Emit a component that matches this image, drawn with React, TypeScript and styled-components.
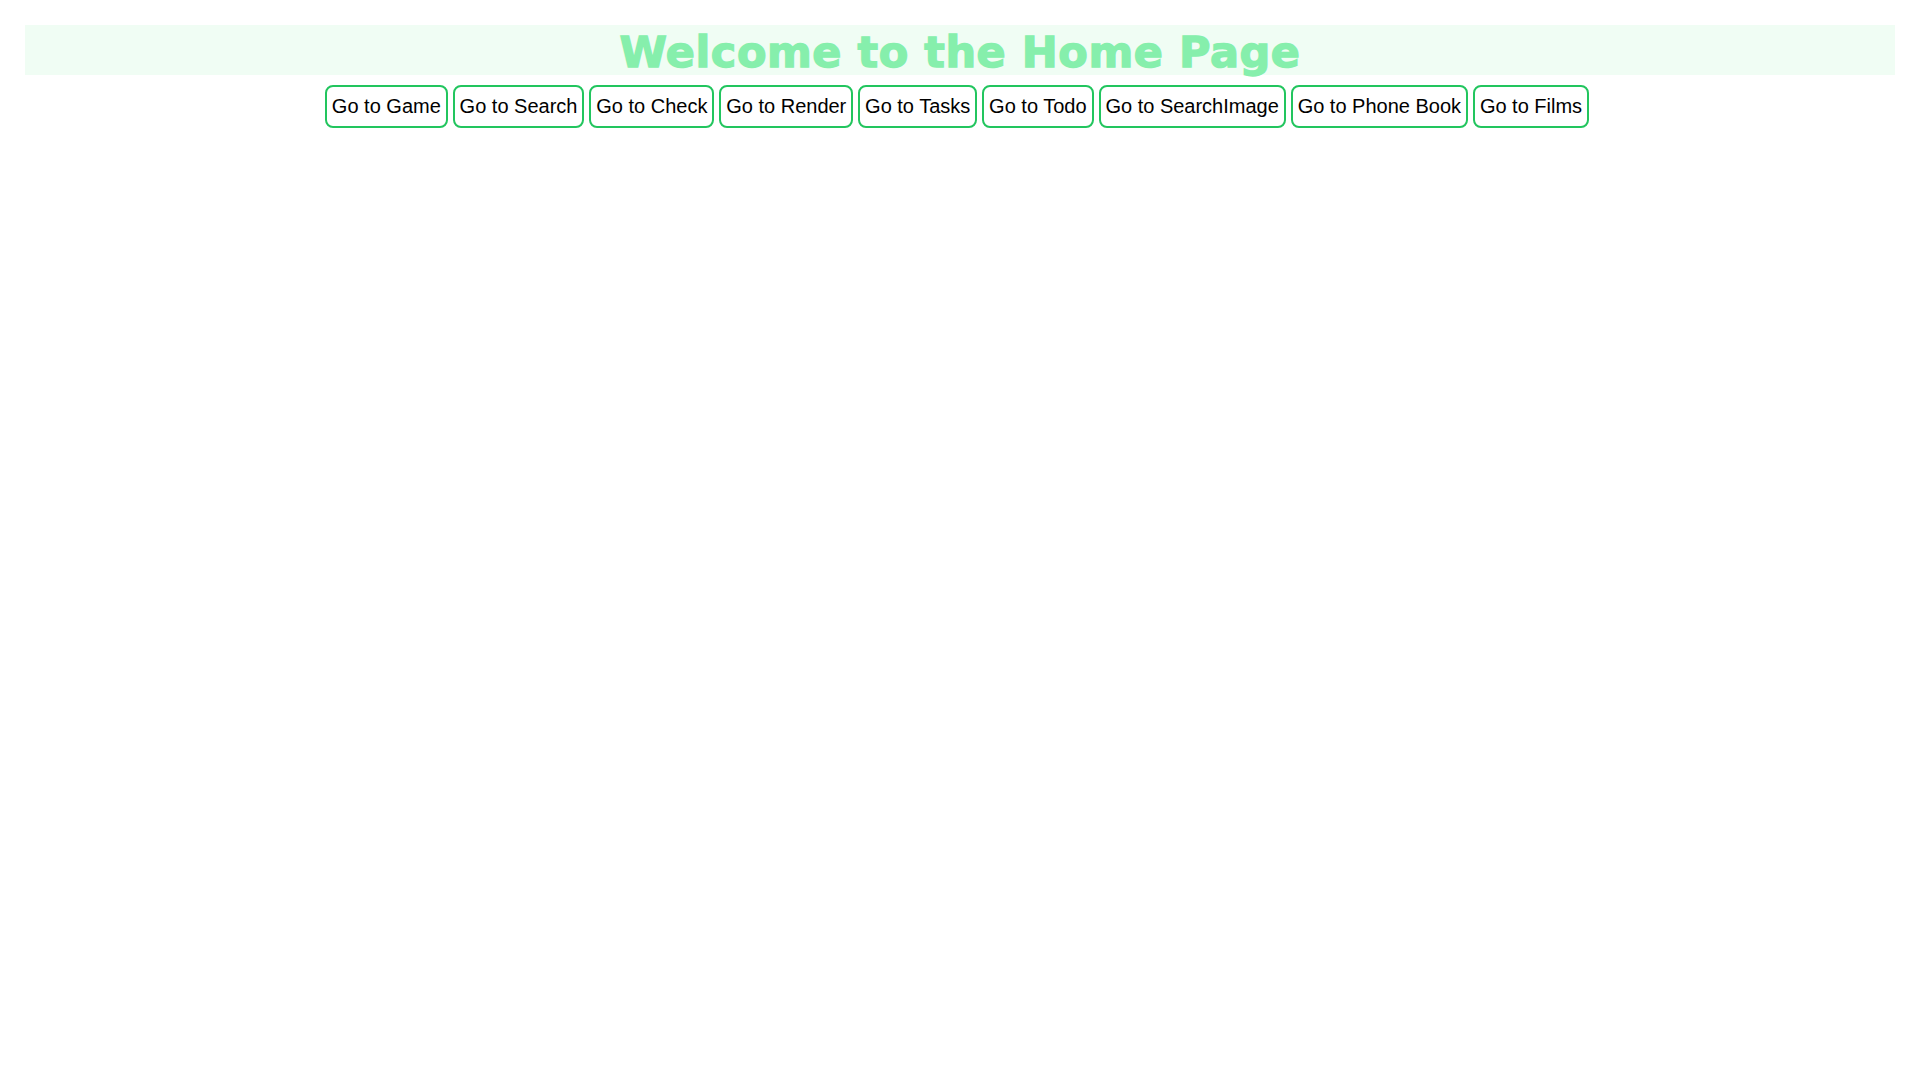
import React from "react";
import styled, { createGlobalStyle } from "styled-components";

const GlobalStyle = createGlobalStyle`
  html, body {
    margin: 0;
    padding: 0;
    background: #ffffff;
  }
  body {
    font-family: "Liberation Sans", Arial, sans-serif;
  }
`;

const Page = styled.div`
  padding: 25px 24px 25px 25px;
  display: flex;
  flex-direction: column;
  gap: 10px;
`;

const Banner = styled.header`
  background: #f0fdf4;
  height: 50px;
  display: flex;
  align-items: center;
  justify-content: center;
`;

const Title = styled.h1`
  margin: 0;
  padding-top: 4px;
  font-family: "DejaVu Sans", "Liberation Sans", sans-serif;
  font-weight: 700;
  font-size: 43px;
  line-height: 46px;
  color: #86efac;
  -webkit-text-stroke: 1.4px #86efac;
  letter-spacing: 0.55px;
`;

const Nav = styled.nav`
  display: flex;
  justify-content: center;
  gap: 5px;
  padding-right: 6px;
`;

const NavButton = styled.button`
  font-family: "Liberation Sans", Arial, sans-serif;
  font-size: 20px;
  line-height: 23px;
  color: #000000;
  background: #ffffff;
  border: 2px solid #22c55e;
  border-radius: 8px;
  padding: 8px 4.9px;
  cursor: pointer;
  white-space: nowrap;
`;

const links = [
  "Game",
  "Search",
  "Check",
  "Render",
  "Tasks",
  "Todo",
  "SearchImage",
  "Phone Book",
  "Films",
];

export default function App() {
  return (
    <>
      <GlobalStyle />
      <Page>
        <Banner>
          <Title>Welcome to the Home Page</Title>
        </Banner>
        <Nav>
          {links.map((l) => (
            <NavButton key={l}>Go to {l}</NavButton>
          ))}
        </Nav>
      </Page>
    </>
  );
}
